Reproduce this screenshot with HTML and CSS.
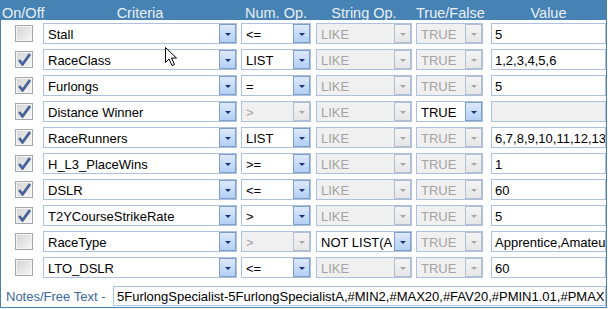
FILE: index.html
```html
<!DOCTYPE html>
<html lang="en">
<head>
    <meta charset="UTF-8">
    <meta name="viewport" content="width=device-width, initial-scale=1.0">
    <title>Criteria Filter</title>
    <link rel="stylesheet" href="styles.css">
</head>
<body>
    <div class="panel">
        <div class="header">
            <div class="head-cell onoff">On/Off</div>
            <div class="head-cell">Criteria</div>
            <div class="head-cell w70">Num. Op.</div>
            <div class="head-cell w96">String Op.</div>
            <div class="head-cell w67">True/False</div>
            <div class="head-cell w115">Value</div>
        </div>

        <div class="rows">
            <!-- Stall -->
            <div class="cell"><span class="check"></span></div>
            <div class="field crit"><span class="txt">Stall</span><span class="btn"></span></div>
            <div class="field num"><span class="txt">&lt;=</span><span class="btn"></span></div>
            <div class="field str off"><span class="txt">LIKE</span><span class="btn"></span></div>
            <div class="field tf off"><span class="txt">TRUE</span><span class="btn"></span></div>
            <div class="field val"><span class="txt">5</span></div>

            <!-- RaceClass -->
            <div class="cell"><span class="check on"></span></div>
            <div class="field crit"><span class="txt">RaceClass</span><span class="btn"></span></div>
            <div class="field num"><span class="txt">LIST</span><span class="btn"></span></div>
            <div class="field str off"><span class="txt">LIKE</span><span class="btn"></span></div>
            <div class="field tf off"><span class="txt">TRUE</span><span class="btn"></span></div>
            <div class="field val"><span class="txt">1,2,3,4,5,6</span></div>

            <!-- Furlongs -->
            <div class="cell"><span class="check on"></span></div>
            <div class="field crit"><span class="txt">Furlongs</span><span class="btn"></span></div>
            <div class="field num"><span class="txt">=</span><span class="btn"></span></div>
            <div class="field str off"><span class="txt">LIKE</span><span class="btn"></span></div>
            <div class="field tf off"><span class="txt">TRUE</span><span class="btn"></span></div>
            <div class="field val"><span class="txt">5</span></div>

            <!-- Distance Winner -->
            <div class="cell"><span class="check on"></span></div>
            <div class="field crit"><span class="txt">Distance Winner</span><span class="btn"></span></div>
            <div class="field num off"><span class="txt">&gt;</span><span class="btn"></span></div>
            <div class="field str off"><span class="txt">LIKE</span><span class="btn"></span></div>
            <div class="field tf"><span class="txt">TRUE</span><span class="btn"></span></div>
            <div class="field val off"><span class="txt"></span></div>

            <!-- RaceRunners -->
            <div class="cell"><span class="check on"></span></div>
            <div class="field crit"><span class="txt">RaceRunners</span><span class="btn"></span></div>
            <div class="field num"><span class="txt">LIST</span><span class="btn"></span></div>
            <div class="field str off"><span class="txt">LIKE</span><span class="btn"></span></div>
            <div class="field tf off"><span class="txt">TRUE</span><span class="btn"></span></div>
            <div class="field val"><span class="txt">6,7,8,9,10,11,12,13</span></div>

            <!-- H_L3_PlaceWins -->
            <div class="cell"><span class="check on"></span></div>
            <div class="field crit"><span class="txt">H_L3_PlaceWins</span><span class="btn"></span></div>
            <div class="field num"><span class="txt">&gt;=</span><span class="btn"></span></div>
            <div class="field str off"><span class="txt">LIKE</span><span class="btn"></span></div>
            <div class="field tf off"><span class="txt">TRUE</span><span class="btn"></span></div>
            <div class="field val"><span class="txt">1</span></div>

            <!-- DSLR -->
            <div class="cell"><span class="check on"></span></div>
            <div class="field crit"><span class="txt">DSLR</span><span class="btn"></span></div>
            <div class="field num"><span class="txt">&lt;=</span><span class="btn"></span></div>
            <div class="field str off"><span class="txt">LIKE</span><span class="btn"></span></div>
            <div class="field tf off"><span class="txt">TRUE</span><span class="btn"></span></div>
            <div class="field val"><span class="txt">60</span></div>

            <!-- T2YCourseStrikeRate -->
            <div class="cell"><span class="check on"></span></div>
            <div class="field crit"><span class="txt">T2YCourseStrikeRate</span><span class="btn"></span></div>
            <div class="field num"><span class="txt">&gt;</span><span class="btn"></span></div>
            <div class="field str off"><span class="txt">LIKE</span><span class="btn"></span></div>
            <div class="field tf off"><span class="txt">TRUE</span><span class="btn"></span></div>
            <div class="field val"><span class="txt">5</span></div>

            <!-- RaceType -->
            <div class="cell"><span class="check"></span></div>
            <div class="field crit"><span class="txt">RaceType</span><span class="btn"></span></div>
            <div class="field num off"><span class="txt">&gt;</span><span class="btn"></span></div>
            <div class="field str"><span class="txt">NOT LIST(A</span><span class="btn"></span></div>
            <div class="field tf off"><span class="txt">TRUE</span><span class="btn"></span></div>
            <div class="field val"><span class="txt">Apprentice,Amateu</span></div>

            <!-- LTO_DSLR -->
            <div class="cell"><span class="check"></span></div>
            <div class="field crit"><span class="txt">LTO_DSLR</span><span class="btn"></span></div>
            <div class="field num"><span class="txt">&lt;=</span><span class="btn"></span></div>
            <div class="field str off"><span class="txt">LIKE</span><span class="btn"></span></div>
            <div class="field tf off"><span class="txt">TRUE</span><span class="btn"></span></div>
            <div class="field val"><span class="txt">60</span></div>
        </div>

        <div class="notes">
            <span class="notes-label">Notes/Free Text -</span>
            <div class="field notes-field"><span class="txt">5FurlongSpecialist-5FurlongSpecialistA,#MIN2,#MAX20,#FAV20,#PMIN1.01,#PMAX100</span></div>
        </div>
    </div>

    <svg class="cursor" width="14" height="21" viewBox="0 0 14 21">
        <path d="M1.5 1.5 L1.5 16.5 L5 13 L8 19.5 L10.5 18.5 L7.5 12 L12.5 12 Z" fill="#fff" stroke="#000" stroke-width="1" stroke-linejoin="miter"/>
    </svg>
</body>
</html>
```

FILE: styles.css
```css
body {
    margin: 0;
    font-family: "Liberation Sans", Arial, sans-serif;
    font-size: 13px;
    background: #fff;
}

.panel {
    width: 605px;
    border: 1px solid #4682b4;
    border-top: none;
    padding-bottom: 1px;
}

.header {
    display: grid;
    grid-template-columns: 42px 198px 75px 100px 75px 115px;
    height: 20px;
    background: #4682b4;
    color: #e9f0f8;
    font-size: 14.5px;
    line-height: 26px;
    overflow: hidden;
}

.head-cell {
    width: 194px;
    text-align: center;
    white-space: nowrap;
}

.head-cell.onoff {
    width: auto;
    text-align: left;
    padding-left: 1px;
}

.head-cell.w70 { width: 70px; }
.head-cell.w96 { width: 96px; }
.head-cell.w67 { width: 67px; }
.head-cell.w115 { width: 115px; }

.rows {
    display: grid;
    grid-template-columns: 42px 198px 75px 100px 75px 115px;
    grid-auto-rows: 21px;
    row-gap: 5px;
    padding-top: 3px;
}

.cell {
    display: flex;
    align-items: center;
    padding-left: 14px;
}

.check {
    position: relative;
    width: 18px;
    height: 17px;
    box-sizing: border-box;
    border: 1px solid #a2a8b0;
    background: linear-gradient(135deg, #d3d3d3, #f7f7f7);
    box-shadow: inset 0 0 0 1px #f4f4f4;
}

.check.on::after {
    content: "";
    position: absolute;
    left: 2px;
    top: 1px;
    width: 13px;
    height: 13px;
    background: url("data:image/svg+xml;utf8,<svg xmlns='http://www.w3.org/2000/svg' width='13' height='13' viewBox='0 0 13 13'><path d='M1.2 7 L4.5 11.3 L12 1' fill='none' stroke='%234a6396' stroke-width='2.8'/></svg>") no-repeat;
}

.field {
    position: relative;
    box-sizing: border-box;
    height: 21px;
    border: 1px solid #abc1de;
    background: #fff;
    color: #000;
    line-height: 19px;
    padding: 1px 0 0 4px;
    overflow: hidden;
    white-space: nowrap;
}

.field.crit { width: 194px; }
.field.num { width: 70px; }
.field.str { width: 96px; }
.field.tf { width: 67px; }
.field.val { width: 115px; padding-left: 3px; }

.field.off {
    background: #f0f0f0;
    color: #a3a3a3;
}

.btn {
    position: absolute;
    top: 0;
    right: 0;
    width: 15px;
    height: 17px;
    border: 1px solid #7f9fcb;
    background: linear-gradient(#dde9fb, #b3cff4);
}

.btn::after {
    content: "";
    position: absolute;
    left: 5px;
    top: 8px;
    border-left: 3px solid transparent;
    border-right: 3px solid transparent;
    border-top: 3px solid #1b3272;
}

.off .btn {
    border-color: #b3bfcf;
    background: linear-gradient(#f4f4f4, #e6e6e6);
}

.off .btn::after {
    border-top-color: #a6a6a6;
}

.notes {
    display: flex;
    align-items: center;
    margin-top: 8px;
}

.notes-label {
    color: #3a68a0;
    padding-left: 5px;
    width: 107px;
    white-space: nowrap;
}

.notes-field {
    flex: 1;
    height: 20px;
    line-height: 18px;
    padding-left: 3px;
}

.cursor {
    position: absolute;
    left: 164px;
    top: 46px;
}
```
